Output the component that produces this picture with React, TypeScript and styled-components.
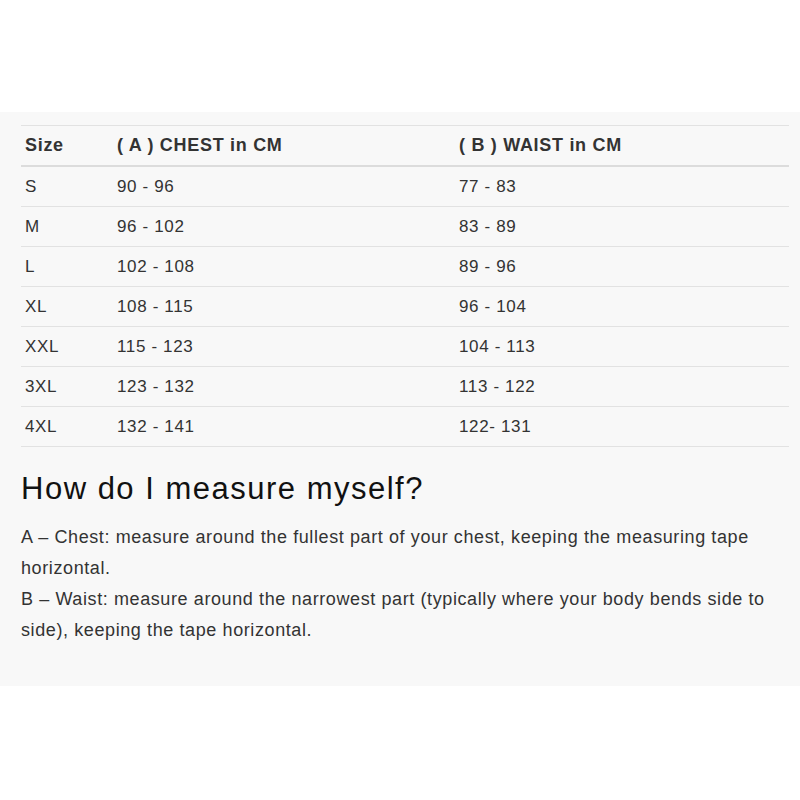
import React from "react";
import styled, { createGlobalStyle } from "styled-components";

const Global = createGlobalStyle`
  html, body { margin: 0; padding: 0; background: #ffffff; }
  body { font-family: "Liberation Sans", Arial, sans-serif; color: #333333; }
`;

const Page = styled.div`
  width: 800px;
  height: 800px;
  background: #ffffff;
  padding-top: 112px;
  box-sizing: border-box;
`;

const Panel = styled.section`
  background: #f8f8f8;
  padding: 13px 11px 0 21px;
  height: 574px;
  box-sizing: border-box;
`;

const Table = styled.table`
  width: 768px;
  border-collapse: collapse;
  font-size: 17px;
  letter-spacing: 0.65px;
  color: #333333;
`;

const HeadCell = styled.th`
  text-align: left;
  font-weight: bold;
  font-size: 18px;
  letter-spacing: 0.7px;
  height: 39px;
  padding: 0 4px;
  border-top: 1px solid #e2e2e2;
  border-bottom: 2px solid #dcdcdc;
  vertical-align: middle;
`;

const Cell = styled.td`
  height: 39px;
  padding: 0 4px;
  border-bottom: 1px solid #e2e2e2;
  vertical-align: middle;
`;

const Title = styled.h2`
  margin: 22px 0 0 0;
  font-size: 31px;
  letter-spacing: 1.5px;
  font-weight: normal;
  color: #111111;
  line-height: 40px;
`;

const Text = styled.p`
  margin: 13px 0 0 0;
  font-size: 18px;
  letter-spacing: 0.6px;
  line-height: 31px;
  color: #333333;
  padding-right: 10px;
`;

const rows: [string, string, string][] = [
  ["S", "90 - 96", "77 - 83"],
  ["M", "96 - 102", "83 - 89"],
  ["L", "102 - 108", "89 - 96"],
  ["XL", "108 - 115", "96 - 104"],
  ["XXL", "115 - 123", "104 - 113"],
  ["3XL", "123 - 132", "113 - 122"],
  ["4XL", "132 - 141", "122- 131"],
];

export default function App() {
  return (
    <>
      <Global />
      <Page>
        <Panel>
          <Table>
            <colgroup>
              <col style={{ width: 92 }} />
              <col style={{ width: 342 }} />
              <col />
            </colgroup>
            <thead>
              <tr>
                <HeadCell>Size</HeadCell>
                <HeadCell>( A ) CHEST in CM</HeadCell>
                <HeadCell>( B ) WAIST in CM</HeadCell>
              </tr>
            </thead>
            <tbody>
              {rows.map((r) => (
                <tr key={r[0]}>
                  <Cell>{r[0]}</Cell>
                  <Cell>{r[1]}</Cell>
                  <Cell>{r[2]}</Cell>
                </tr>
              ))}
            </tbody>
          </Table>
          <Title>How do I measure myself?</Title>
          <Text>
            A – Chest: measure around the fullest part of your chest, keeping the measuring tape horizontal.
            <br />
            B – Waist: measure around the narrowest part (typically where your body bends side to side), keeping the tape horizontal.
          </Text>
        </Panel>
      </Page>
    </>
  );
}
